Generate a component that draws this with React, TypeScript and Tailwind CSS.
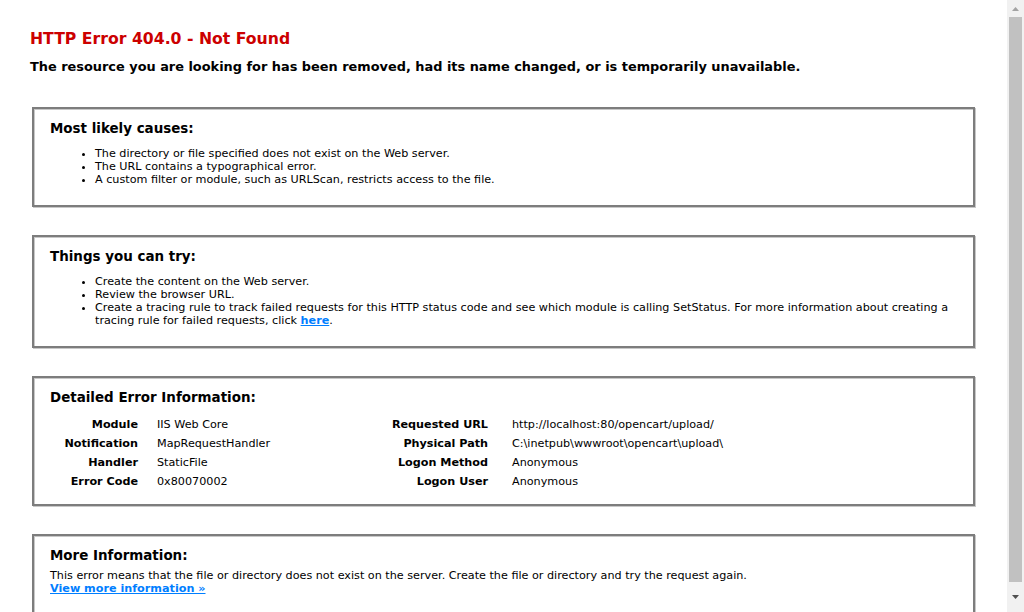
import React from "react";

const Box = ({ children, className = "" }: { children: React.ReactNode; className?: string }) => (
  <div
    className={
      "ml-[2px] w-[943px] border-2 border-[#7d7d7d] shadow-[inset_1px_1px_0_#c8c8c8,1px_1px_0_#c8c8c8] bg-white px-[16px] pt-[12px] " +
      className
    }
  >
    {children}
  </div>
);

const H4 = ({ children, className = "" }: { children: React.ReactNode; className?: string }) => (
  <h4 className={"text-[13.44px] leading-[16px] font-bold text-black " + className}>{children}</h4>
);

const Row = ({ label, value, lw, gap }: { label: string; value: string; lw: string; gap: string }) => (
  <div className="flex h-[19px] items-center">
    <div className={lw + " text-right font-bold"}>{label}</div>
    <div className={gap}>{value}</div>
  </div>
);

export default function App() {
  return (
    <div className="flex h-[612px] w-[1024px] overflow-hidden bg-white font-['DejaVu_Sans',sans-serif] text-[11.2px] leading-[13px] text-black">
      <div className="flex-1 overflow-hidden pl-[30px] pt-[30px]">
        <h2 className="text-[15.68px] leading-[18px] font-bold text-[#cc0000]">HTTP Error 404.0 - Not Found</h2>
        <h3 className="mt-[11px] text-[12.9px] leading-[15px] font-bold text-black">
          The resource you are looking for has been removed, had its name changed, or is temporarily unavailable.
        </h3>

        <div className="mt-[33px] flex flex-col gap-[28px]">
          <Box className="pb-[19px]">
            <H4 className="mb-[10px]">Most likely causes:</H4>
            <ul className="ml-[5px] list-disc pl-[40px]">
              <li>The directory or file specified does not exist on the Web server.</li>
              <li>The URL contains a typographical error.</li>
              <li>A custom filter or module, such as URLScan, restricts access to the file.</li>
            </ul>
          </Box>

          <Box className="pb-[19px]">
            <H4 className="mb-[10px]">Things you can try:</H4>
            <ul className="ml-[5px] list-disc pl-[40px]">
              <li>Create the content on the Web server.</li>
              <li>Review the browser URL.</li>
              <li>
                Create a tracing rule to track failed requests for this HTTP status code and see which module is calling
                SetStatus. For more information about creating a tracing rule for failed requests, click{" "}
                <a className="font-bold text-[#007eff] underline" href="#">
                  here
                </a>
                .
              </li>
            </ul>
          </Box>

          <Box className="pb-[13px]">
            <H4 className="mb-[9px]">Detailed Error Information:</H4>
            <div className="flex">
              <div className="w-[338px]">
                <Row lw="w-[88px]" gap="ml-[19px]" label="Module" value="IIS Web Core" />
                <Row lw="w-[88px]" gap="ml-[19px]" label="Notification" value="MapRequestHandler" />
                <Row lw="w-[88px]" gap="ml-[19px]" label="Handler" value="StaticFile" />
                <Row lw="w-[88px]" gap="ml-[19px]" label="Error Code" value="0x80070002" />
              </div>
              <div className="flex-1">
                <Row lw="w-[100px]" gap="ml-[24px]" label="Requested URL" value="http://localhost:80/opencart/upload/" />
                <Row lw="w-[100px]" gap="ml-[24px]" label="Physical Path" value="C:\inetpub\wwwroot\opencart\upload\" />
                <Row lw="w-[100px]" gap="ml-[24px]" label="Logon Method" value="Anonymous" />
                <Row lw="w-[100px]" gap="ml-[24px]" label="Logon User" value="Anonymous" />
              </div>
            </div>
          </Box>

          <Box className="pb-[20px]">
            <H4 className="mb-[5px]">More Information:</H4>
            <p>
              This error means that the file or directory does not exist on the server. Create the file or directory and
              try the request again.
            </p>
            <p>
              <a className="font-bold text-[#007eff] underline" href="#">
                View more information »
              </a>
            </p>
            <div className="h-[20px]" />
          </Box>
        </div>
      </div>

      <div className="flex w-[17px] shrink-0 flex-col bg-[#f1f1f1]">
        <div className="flex h-[17px] items-center justify-center">
          <svg width="7" height="4" viewBox="0 0 7 4">
            <polygon points="3.5,0 7,4 0,4" fill="#a3a3a3" />
          </svg>
        </div>
        <div className="mx-[2px] h-[565px] bg-[#c1c1c1]" />
        <div className="flex flex-1 items-center justify-center">
          <svg width="7" height="4" viewBox="0 0 7 4">
            <polygon points="0,0 7,0 3.5,4" fill="#505050" />
          </svg>
        </div>
      </div>
    </div>
  );
}
